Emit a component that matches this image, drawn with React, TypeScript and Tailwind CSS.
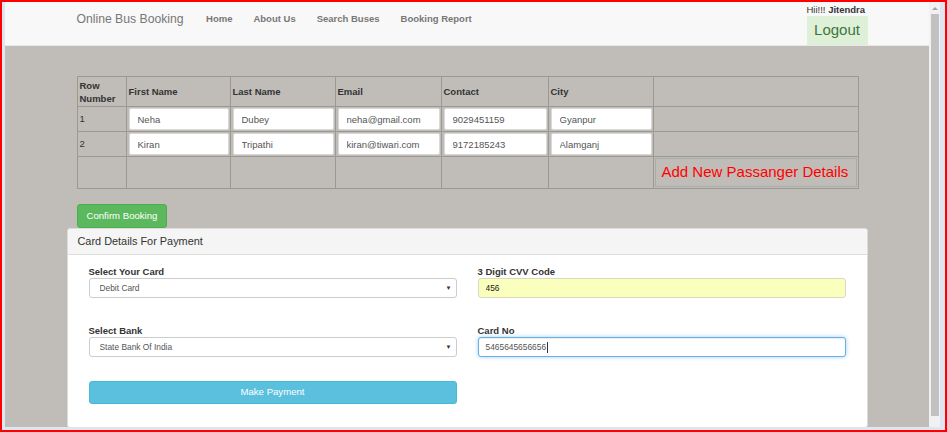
import { ChangeEvent, useState } from "react";

// passengers added so far
const PASSENGERS = [
    { row: 1, first: "Neha", last: "Dubey", email: "neha@gmail.com", contact: "9029451159", city: "Gyanpur" },
    { row: 2, first: "Kiran", last: "Tripathi", email: "kiran@tiwari.com", contact: "9172185243", city: "Alamganj" },
];

const NAV_LINKS = ["Home", "About Us", "Search Buses", "Booking Report"];

const Navbar = () => (
    <nav className="h-[44px] shrink-0 bg-[#f8f8f8] border-b border-[#e7e7e7]">
        <div className="w-[801px] mx-auto flex">
            <div className="h-[34px] flex items-center pl-[10px] pr-[12px] text-[12.2px] text-[#777]">
                Online Bus Booking
            </div>
            <ul className="flex">
                {NAV_LINKS.map((link) => (
                    <li
                        key={link}
                        className="h-[34px] flex items-center px-[10.5px] text-[9.5px] font-bold text-[#777] cursor-pointer">
                        {link}
                    </li>
                ))}
            </ul>
            <div className="ml-auto pt-[2px] flex flex-col items-start">
                <div className="h-[12px] leading-[12px] text-[9.5px] text-[#333]">
                    Hii!!! <b>Jitendra</b>
                </div>
                <button className="h-[29px] w-[61px] bg-[#dff0d8] text-[#3c763d] text-[15px]">
                    Logout
                </button>
            </div>
        </div>
    </nav>
);

const Scrollbar = () => (
    <div className="w-[11px] shrink-0 bg-[#f1f1f1] flex flex-col items-center">
        <div className="mt-[5px] w-0 h-0 border-l-[3px] border-r-[3px] border-b-[3px] border-l-transparent border-r-transparent border-b-[#a3a3a3]" />
        <div className="mt-[4px] w-[8px] h-[402px] bg-[#c1c1c1]" />
    </div>
);

const cellInput =
    "block w-full h-[22px] bg-white border border-[#d9d9d9] rounded-[2px] pl-[8px] text-[9.5px] text-[#555] outline-none";

const PassengerTable = () => (
    <table className="w-[781px] table-fixed border-collapse text-[9.5px] text-[#333]">
        <colgroup>
            <col className="w-[49px]" />
            <col className="w-[104px]" />
            <col className="w-[105px]" />
            <col className="w-[106px]" />
            <col className="w-[107px]" />
            <col className="w-[105px]" />
            <col className="w-[205px]" />
        </colgroup>
        <thead>
            <tr className="h-[30px]">
                {["Row Number", "First Name", "Last Name", "Email", "Contact", "City", ""].map((h, i) => (
                    <th
                        key={i}
                        className="border border-[#9c9894] px-[2px] text-left font-bold leading-[13px] align-middle">
                        {h}
                    </th>
                ))}
            </tr>
        </thead>
        <tbody>
            {PASSENGERS.map((p) => (
                <tr key={p.row} className="h-[25px]">
                    <td className="border border-[#9c9894] px-[2px]">{p.row}</td>
                    {[p.first, p.last, p.email, p.contact, p.city].map((v, i) => (
                        <td key={i} className="border border-[#9c9894] pl-[2px] pr-[1px] py-[1px]">
                            <input className={cellInput} value={v} readOnly />
                        </td>
                    ))}
                    <td className="border border-[#9c9894]" />
                </tr>
            ))}
            <tr className="h-[31px]">
                {[0, 1, 2, 3, 4, 5].map((i) => (
                    <td key={i} className="border border-[#9c9894]" />
                ))}
                <td className="border border-[#9c9894] p-[1px]">
                    <div className="h-[29px] border border-[#a7adac] flex items-center pl-[6px] text-[15px] text-[#ff0000] cursor-pointer">
                        Add New Passanger Details
                    </div>
                </td>
            </tr>
        </tbody>
    </table>
);

const Label = ({ children }: { children: string }) => (
    <label className="block pt-[1px] font-bold text-[9.5px] leading-[13px] text-[#333]">{children}</label>
);

const SelectBox = ({ value, options }: { value: string; options: string[] }) => (
    <div className="relative">
        <select
            defaultValue={value}
            className="block appearance-none w-full h-[20px] bg-white border border-[#ccc] rounded-[3px] pl-[10px] text-[8.4px] text-[#555] outline-none">
            {options.map((o) => (
                <option key={o}>{o}</option>
            ))}
        </select>
        <span className="absolute right-[5px] top-[7px] text-[6px] leading-[6px] text-[#333]">▼</span>
    </div>
);

const PaymentPanel = () => {
    const [cvv, setCvv] = useState("456");

    return (
        <div className="bg-white border border-[#ddd] rounded-[3px] shadow-[0_1px_1px_rgba(0,0,0,0.08)]">
            <div className="h-[26px] bg-[#f5f5f5] border-b border-[#ddd] rounded-t-[3px] px-[10px] flex items-center text-[10.9px] text-[#333]">
                Card Details For Payment
            </div>
            <div className="px-[21px] pt-[9px] pb-[23px]">
                <div className="grid grid-cols-2 gap-x-[21px] gap-y-[25px]">
                    <div>
                        <Label>Select Your Card</Label>
                        <SelectBox value="Debit Card" options={["Debit Card", "Credit Card"]} />
                    </div>
                    <div>
                        <Label>3 Digit CVV Code</Label>
                        <input
                            value={cvv}
                            onChange={(e: ChangeEvent<HTMLInputElement>) => setCvv(e.target.value)}
                            className="block w-full h-[20px] bg-[#faffbd] border border-[#d9d9c0] rounded-[3px] pl-[7px] text-[8.4px] text-[#222] outline-none"
                        />
                    </div>
                    <div>
                        <Label>Select Bank</Label>
                        <SelectBox value="State Bank Of India" options={["State Bank Of India", "HDFC Bank"]} />
                    </div>
                    <div>
                        <Label>Card No</Label>
                        {/* focused field, caret drawn after the text */}
                        <div className="h-[20px] bg-white border border-[#66afe9] rounded-[3px] pl-[7px] flex items-center text-[8.4px] text-[#555] shadow-[inset_0_1px_1px_rgba(0,0,0,0.075),0_0_4px_rgba(102,175,233,0.6)]">
                            5465645656656
                            <span className="ml-[1px] w-px h-[11px] bg-[#333]" />
                        </div>
                    </div>
                </div>
                <div className="grid grid-cols-2 gap-x-[21px] mt-[24px]">
                    <button className="block h-[23px] w-full bg-[#5bc0de] border border-[#46b8da] rounded-[3px] text-white text-[9.6px]">
                        Make Payment
                    </button>
                </div>
            </div>
        </div>
    );
};

const App = () => {
    return (
        <div className="w-[947px] h-[432px] overflow-hidden border-2 border-[#ff0000] bg-[#dde6f1] font-['Liberation_Sans',Arial,sans-serif]">
            <div className="flex h-[425px]">
                <div className="w-[3px] shrink-0" />
                <div className="w-[924px] shrink-0 flex flex-col overflow-hidden">
                    <Navbar />
                    <main className="flex-1 bg-[#c0bcb8] pt-[30px]">
                        <div className="w-[801px] mx-auto">
                            <div className="px-[10px]">
                                <PassengerTable />
                                <button className="block mt-[15px] h-[24px] px-[9px] bg-[#5cb85c] border border-[#4cae4c] rounded-[3px] text-white text-[9.6px]">
                                    Confirm Booking
                                </button>
                            </div>
                            <PaymentPanel />
                        </div>
                    </main>
                </div>
                <Scrollbar />
            </div>
        </div>
    );
};

export default App;
